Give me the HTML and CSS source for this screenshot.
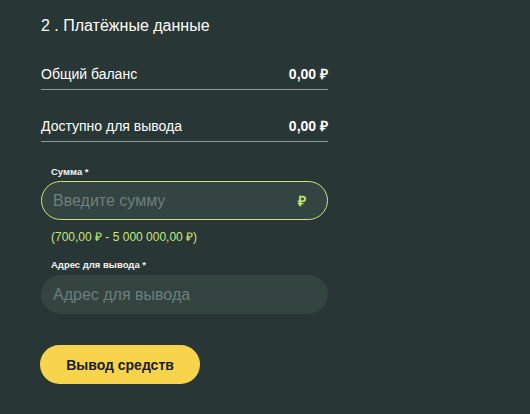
FILE: index.html
```html
<!DOCTYPE html>
<html lang="ru">
<head>
<meta charset="utf-8">
<link rel="stylesheet" href="styles.css">
</head>
<body>
<div class="page">
  <section class="card">
    <h2 class="title">2 . Платёжные данные</h2>
    <div class="row first">
      <span class="row-label">Общий баланс</span>
      <span class="row-value">0,00 ₽</span>
    </div>
    <div class="row">
      <span class="row-label">Доступно для вывода</span>
      <span class="row-value">0,00 ₽</span>
    </div>
    <div class="field amount">
      <label class="field-label">Сумма *</label>
      <div class="input active">
        <span class="placeholder">Введите сумму</span>
        <span class="suffix">₽</span>
      </div>
      <div class="hint">(700,00 ₽ - 5 000 000,00 ₽)</div>
    </div>
    <div class="field address">
      <label class="field-label">Адрес для вывода *</label>
      <div class="input">
        <span class="placeholder">Адрес для вывода</span>
      </div>
    </div>
    <button class="btn">Вывод средств</button>
  </section>
</div>
</body>
</html>
```
FILE: styles.css
```css
html, body {
  margin: 0;
  padding: 0;
}
body {
  background: #2f3f43;
  font-family: "Liberation Sans", Arial, sans-serif;
  color: #ffffff;
}
.page {
  width: 530px;
  height: 414px;
  overflow: hidden;
}
.card {
  background: #283636;
  box-sizing: border-box;
  min-height: 426px;
  padding: 16px 0 0 41px;
  border-bottom-left-radius: 12px;
  display: flex;
  flex-direction: column;
  align-items: flex-start;
}
.title {
  margin: 0;
  font-size: 16px;
  line-height: 20px;
  font-weight: 400;
}
.row {
  width: 287px;
  display: flex;
  justify-content: space-between;
  align-items: center;
  font-size: 14px;
  line-height: 18px;
  padding-bottom: 6px;
  border-bottom: 1px solid #8d9c9a;
  margin-top: 27px;
}
.row.first {
  margin-top: 29px;
}
.row-value {
  font-weight: 700;
}
.field {
  width: 287px;
  display: flex;
  flex-direction: column;
}
.amount {
  margin-top: 24px;
}
.address {
  margin-top: 15px;
}
.field-label {
  font-size: 9.5px;
  line-height: 12px;
  font-weight: 700;
  padding-left: 10px;
  margin-bottom: 3px;
  color: #f2f4f3;
}
.address .field-label {
  margin-bottom: 4px;
}
.input {
  box-sizing: border-box;
  height: 39px;
  border-radius: 20px;
  background: #334441;
  display: flex;
  align-items: center;
  justify-content: space-between;
  padding: 0 17px 0 11px;
  border: 1px solid #334441;
}
.input.active {
  border-color: #c5e878;
}
.placeholder {
  font-size: 16px;
  color: #6e7f7b;
}
.suffix {
  font-size: 14px;
  font-weight: 700;
  color: #c5e878;
  padding-right: 4px;
}
.hint {
  margin-top: 10px;
  padding-left: 10px;
  font-size: 12px;
  line-height: 14px;
  color: #c5e878;
}
.btn {
  margin-top: 31px;
  width: 160px;
  height: 39px;
  border: none;
  border-radius: 20px;
  background: #f8d44c;
  color: #1c1c1c;
  font-family: "Liberation Sans", Arial, sans-serif;
  font-size: 14px;
  font-weight: 700;
  padding: 0;
  margin-left: -1px;
}
```
